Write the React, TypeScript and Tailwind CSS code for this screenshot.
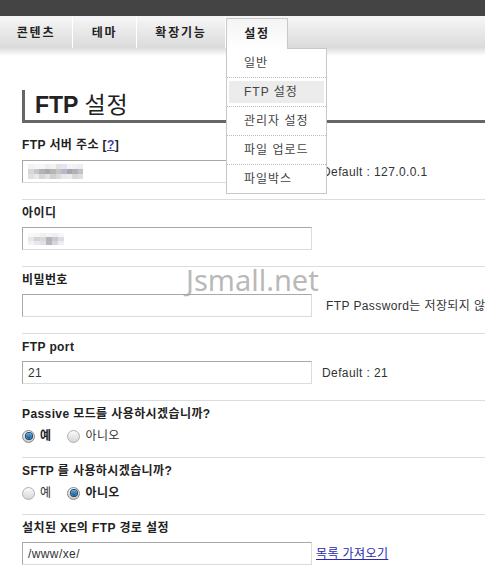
import React from 'react'

const tabs = [
    { label: '콘텐츠', w: 'w-[73px]' },
    { label: '테마', w: 'w-[64px]' },
    { label: '확장기능', w: 'w-[89px]' },
]

const menu = ['일반', 'FTP 설정', '관리자 설정', '파일 업로드', '파일박스']

const mosaicA = [
    ['#f4f2f4', '#f6f6f8', '#f8f6f4', '#eeeef0', '#f2f2f4', '#e4e0e4', '#e2e6f0', '#f4f4f6', '#f2f0f2', '#eeeef2'],
    ['#d8d6d8', '#c6c8c2', '#b2b2ba', '#a9a9ad', '#b8b4b6', '#c8c4be', '#b6b8c8', '#a8a6a8', '#b0b0b6', '#c4c2c6'],
    ['#e0dee2', '#e6eaea', '#d6d4d8', '#e4e2e0', '#d0d0d4', '#dcdad8', '#e6e8ee', '#ecebe4', '#d8d8dc', '#dedee2'],
]

const mosaicB = [
    ['#f8f8f8', '#f6f6f6', '#f2eef2', '#f4f4f6', '#eceef2', '#f6f6f8'],
    ['#e8e4e8', '#d4d2d6', '#d8d8dc', '#b4b4b8', '#c6c8d2', '#dcdcdc'],
    ['#f2f0f2', '#e6e8ec', '#e2e0e4', '#b8b8bc', '#d4d6de', '#eeeeee'],
]

const Mosaic = (props: { rows: string[][], cell: string }) => {
    return (
        <div className="flex flex-col">
            {props.rows.map((row, i) => (
                <div key={i} className="flex">
                    {row.map((c, j) => (
                        <div key={j} className={props.cell} style={{ backgroundColor: c }} />
                    ))}
                </div>
            ))}
        </div>
    )
}

const TextInput = (props: { value?: string, children?: React.ReactNode }) => {
    return (
        <div className="flex h-[23px] w-[290px] shrink-0 items-center border border-t-[#a8a8a8] border-l-[#a8a8a8] border-b-[#dcdcdc] border-r-[#dcdcdc] pl-[5px] text-[12px] text-[#333]">
            {props.children ?? props.value}
        </div>
    )
}

const Radio = (props: { checked?: boolean }) => {
    if (props.checked) {
        return (
            <span className="flex h-[13px] w-[13px] shrink-0 items-center justify-center rounded-full border border-[#8a8a8a] bg-gradient-to-b from-[#f4f4f4] to-[#c8c8c8]">
                <span className="h-[6px] w-[6px] rounded-full bg-gradient-to-b from-[#5aa8e0] to-[#0f5a98] ring-1 ring-[#23415c]" />
            </span>
        )
    }
    return (
        <span className="block h-[13px] w-[13px] shrink-0 rounded-full border border-[#b0b0b0] bg-gradient-to-b from-[#fbfbfb] to-[#d6d6d6]" />
    )
}

const Label = (props: { children: React.ReactNode }) => (
    <div className="h-4 whitespace-nowrap text-[12px] font-bold leading-4 text-[#222]">{props.children}</div>
)

export default function App() {
    return (
        <div className="relative h-[572px] w-[485px] overflow-hidden bg-white font-['Liberation_Sans','Noto_Sans_CJK_KR',sans-serif] text-[12px] tracking-[0.4px] text-[#333]">
            <div className="h-4 bg-[#444]" />

            {/* tab bar */}
            <div className="flex h-[32px] border-t border-[#f4f4f4] bg-gradient-to-b from-[#f6f6f6] to-[#dadada]">
                {tabs.map((t) => (
                    <div key={t.label} className={`${t.w} flex items-center justify-center border-r border-white text-[12px] font-bold tracking-[1.8px] text-[#222]`}>
                        {t.label}
                    </div>
                ))}
                <div className="relative z-20 mt-px flex h-[31px] w-[62px] items-center justify-center border border-b-0 border-[#c8c8c8] bg-gradient-to-b from-[#f4f4f4] to-white text-[12px] font-bold tracking-[1.8px] text-[#222]">
                    설정
                </div>
            </div>
            <div className="h-2 bg-gradient-to-b from-[#dedede] to-white" />

            {/* dropdown */}
            <div className="absolute left-[226px] top-[48px] z-10 w-[101px] border border-[#c8c8c8] bg-white">
                {menu.map((m, i) => (
                    <div key={m} className={`px-[2px] py-[3px] ${i < menu.length - 1 ? 'h-[29px] border-b border-dotted border-[#bdbdbd]' : 'h-[28px]'}`}>
                        <div className={`flex h-full items-center whitespace-nowrap pl-[15px] text-[12px] tracking-[1px] text-[#444] ${m === 'FTP 설정' ? 'bg-[#ececec]' : ''}`}>
                            {m}
                        </div>
                    </div>
                ))}
            </div>

            <div className="ml-[22px] mt-[34px]">
                <h1 className="flex h-[33px] items-start border-b-[3px] border-l-[3px] border-[#666] pl-[10px] text-[23px] font-bold leading-[30px] tracking-normal text-[#222]">
                    FTP <span className="ml-[6px] font-normal tracking-[1px]">설정</span>
                </h1>

                <div className="pb-4 pt-[14px]">
                    <Label>
                        FTP 서버 주소 [<span className="text-[#3b3bb0] underline">?</span>]
                    </Label>
                    <div className="mt-[7px] flex items-center">
                        <TextInput>
                            <Mosaic rows={mosaicA} cell="h-[5px] w-[5.5px]" />
                        </TextInput>
                        <span className="ml-[10px] whitespace-nowrap">Default : 127.0.0.1</span>
                    </div>
                </div>

                <div className="border-t border-[#dcdcdc] pb-4 pt-[5px]">
                    <Label>아이디</Label>
                    <div className="mt-[6px] flex items-center">
                        <TextInput>
                            <Mosaic rows={mosaicB} cell="h-[4px] w-[6px]" />
                        </TextInput>
                    </div>
                </div>

                <div className="border-t border-[#dcdcdc] pb-4 pt-[5px]">
                    <Label>비밀번호</Label>
                    <div className="mt-[6px] flex items-center">
                        <TextInput />
                        <span className="ml-[14px] whitespace-nowrap">FTP Password는 저장되지 않습니다.</span>
                    </div>
                </div>

                <div className="border-t border-[#dcdcdc] pb-4 pt-[5px]">
                    <Label>FTP port</Label>
                    <div className="mt-[6px] flex items-center">
                        <TextInput value="21" />
                        <span className="ml-[10px] whitespace-nowrap">Default : 21</span>
                    </div>
                </div>

                <div className="border-t border-[#dcdcdc] pb-[13px] pt-[5px]">
                    <Label>Passive 모드를 사용하시겠습니까?</Label>
                    <div className="mt-[6px] flex h-4 items-center">
                        <Radio checked />
                        <span className="ml-[5px] font-bold text-[#222]">예</span>
                        <span className="ml-[16px]"><Radio /></span>
                        <span className="ml-[5px]">아니오</span>
                    </div>
                </div>

                <div className="border-t border-[#dcdcdc] pb-[13px] pt-[5px]">
                    <Label>SFTP 를 사용하시겠습니까?</Label>
                    <div className="mt-[6px] flex h-4 items-center">
                        <Radio />
                        <span className="ml-[5px]">예</span>
                        <span className="ml-[16px]"><Radio checked /></span>
                        <span className="ml-[5px] font-bold text-[#222]">아니오</span>
                    </div>
                </div>

                <div className="border-t border-[#dcdcdc] pt-[5px]">
                    <Label>설치된 XE의 FTP 경로 설정</Label>
                    <div className="mt-[6px] flex items-center">
                        <TextInput value="/www/xe/" />
                        <a href="#" className="ml-[4px] whitespace-nowrap text-[#2a2ab0] underline">목록 가져오기</a>
                    </div>
                </div>
            </div>

            {/* watermark */}
            <div className="pointer-events-none absolute left-[186px] top-[262px] font-['Noto_Sans',sans-serif] text-[29px] leading-[36px] tracking-normal text-[#a6a6a6]/80">
                Jsmall.net
            </div>
        </div>
    )
}
